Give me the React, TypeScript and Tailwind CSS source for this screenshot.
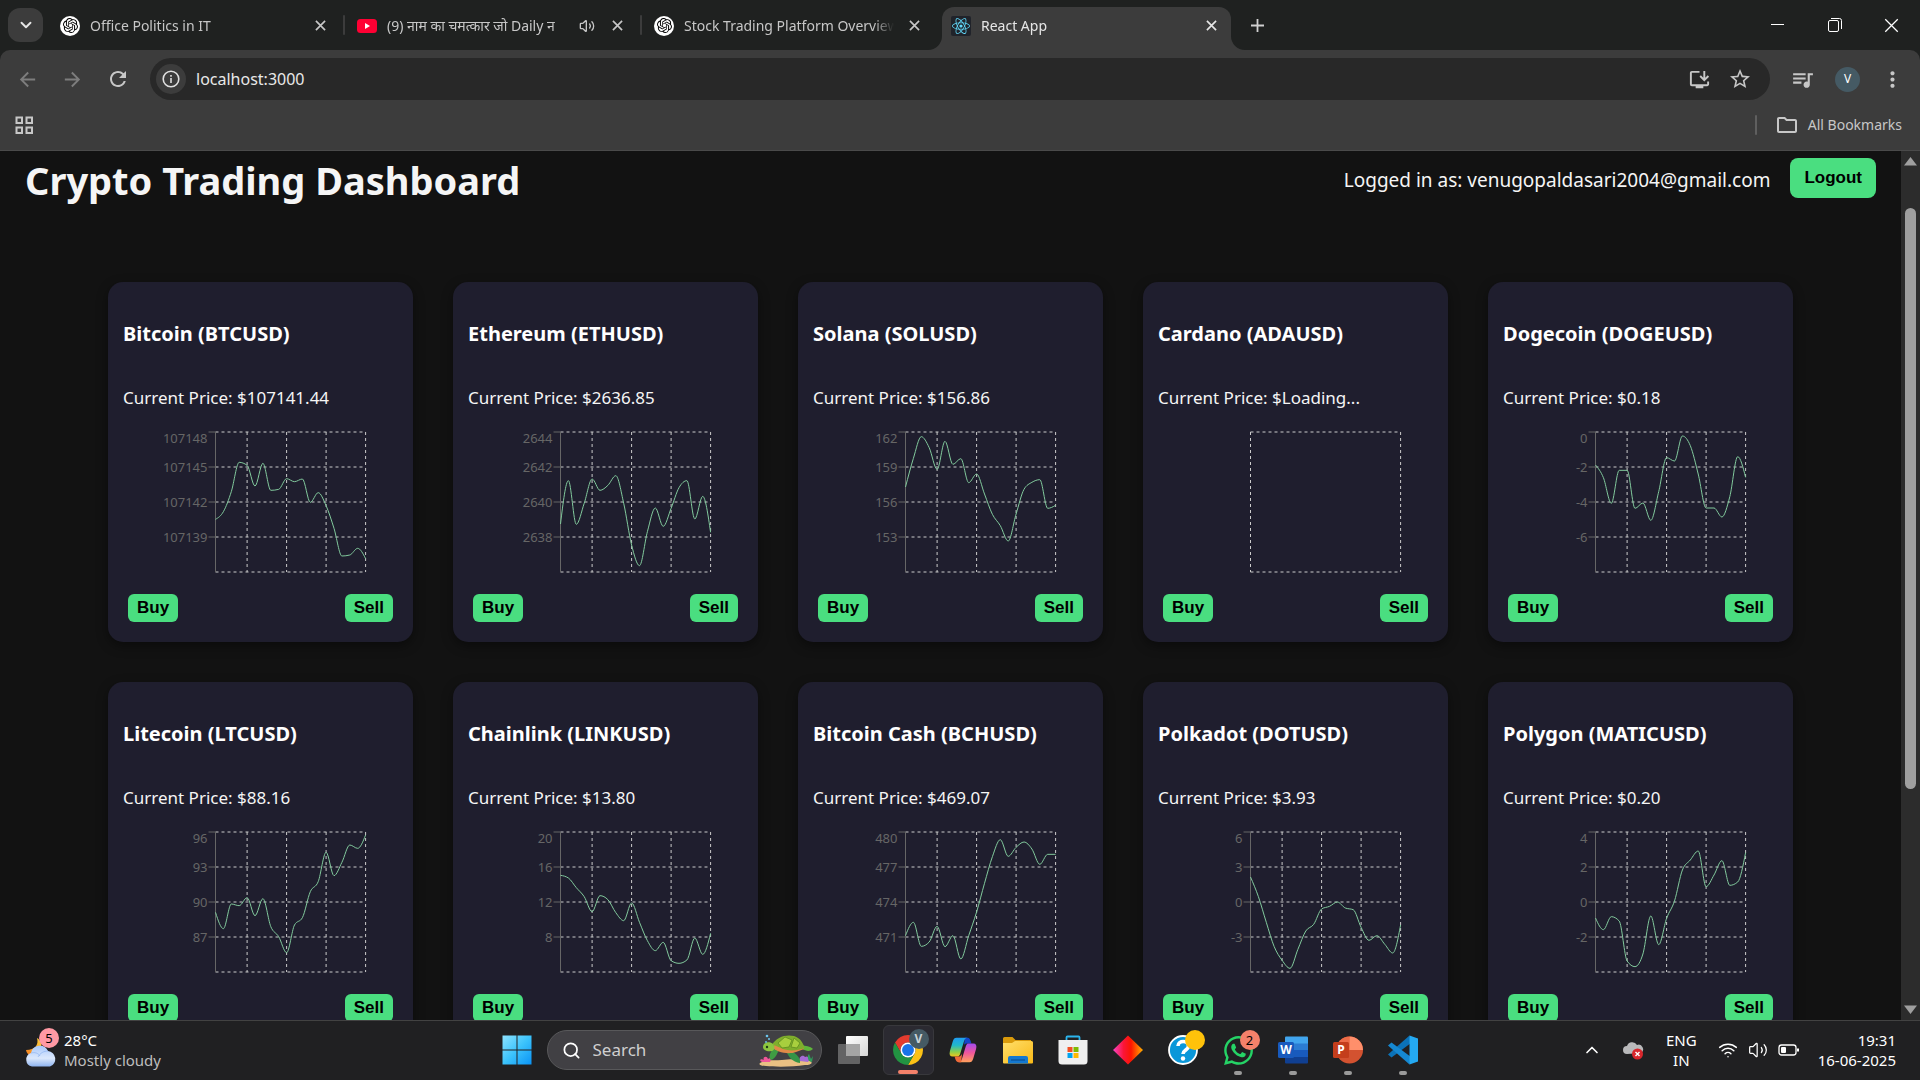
import React from "react";
import { SiOpenai } from "react-icons/si";
import { FaReact, FaWhatsapp } from "react-icons/fa";
import { MdInstallDesktop, MdQueueMusic, MdStarOutline, MdMoreVert, MdRefresh, MdArrowBack, MdArrowForward, MdOutlineFolder } from "react-icons/md";
import { ChevronDown, ChevronUp, Volume2, Wifi, Search } from "lucide-react";

type Coin = { name: string; price: string; ticks: string[]; line: number[] };

/* Each line value is the distance, in thirds of a pixel, below the top of the plot. */
const coins: Coin[] = [
  { name: "Bitcoin (BTCUSD)", price: "107141.44", ticks: ["107148", "107145", "107142", "107139"], line: [262, 239, 179, 91, 100, 162, 94, 175, 172, 140, 149, 141, 211, 182, 221, 289, 372, 369, 349, 380] },
  { name: "Ethereum (ETHUSD)", price: "2636.85", ticks: ["2644", "2642", "2640", "2638"], line: [276, 146, 277, 214, 141, 175, 160, 131, 214, 339, 401, 299, 228, 283, 229, 167, 146, 261, 193, 301] },
  { name: "Solana (SOLUSD)", price: "156.86", ticks: ["162", "159", "156", "153"], line: [165, 79, 14, 47, 112, 28, 97, 80, 152, 126, 186, 247, 281, 327, 246, 172, 151, 143, 229, 220] },
  { name: "Cardano (ADAUSD)", price: "Loading...", ticks: [], line: [] },
  { name: "Dogecoin (DOGEUSD)", price: "0.18", ticks: ["0", "-2", "-4", "-6"], line: [99, 137, 214, 115, 115, 229, 213, 265, 179, 77, 87, 12, 41, 126, 228, 228, 255, 194, 74, 136] },
  { name: "Litecoin (LTCUSD)", price: "88.16", ticks: ["96", "93", "90", "87"], line: [241, 290, 216, 221, 197, 251, 200, 284, 314, 362, 279, 257, 179, 149, 61, 131, 91, 39, 49, 9] },
  { name: "Chainlink (LINKUSD)", price: "13.80", ticks: ["20", "16", "12", "8"], line: [130, 138, 167, 194, 239, 191, 203, 242, 266, 213, 271, 326, 356, 331, 386, 394, 384, 318, 367, 304] },
  { name: "Bitcoin Cash (BCHUSD)", price: "469.07", ticks: ["480", "477", "474", "471"], line: [311, 271, 343, 330, 283, 344, 311, 381, 311, 240, 154, 74, 23, 73, 46, 30, 51, 97, 67, 67] },
  { name: "Polkadot (DOTUSD)", price: "3.93", ticks: ["6", "3", "0", "-3"], line: [135, 194, 271, 344, 385, 409, 352, 297, 277, 231, 223, 210, 228, 233, 286, 325, 311, 337, 363, 279] },
  { name: "Polygon (MATICUSD)", price: "0.20", ticks: ["4", "2", "0", "-2"], line: [258, 293, 254, 267, 387, 404, 366, 252, 338, 259, 207, 114, 84, 57, 164, 129, 86, 160, 150, 62] },
];

const LEFT = 92.5;
const TOP = 5;
const STEP = 7.9;
const WIDTH = STEP * 19;

function monotonePath(line: number[]) {
  const ys = line.map((v) => TOP + v / 3);
  const n = ys.length;
  const slopes = ys.slice(1).map((y, i) => (y - ys[i]) / STEP);
  const m = ys.map((_, i) => {
    if (i === 0 || i === n - 1) return 0;
    const a = slopes[i - 1];
    const b = slopes[i];
    return (Math.sign(a) + Math.sign(b)) * Math.min(Math.abs(a), Math.abs(b), 0.25 * Math.abs(a + b)) || 0;
  });
  m[0] = (3 * slopes[0] - m[1]) / 2;
  m[n - 1] = (3 * slopes[n - 2] - m[n - 2]) / 2;
  let d = `M${LEFT},${ys[0]}`;
  for (let i = 1; i < n; i++) {
    const x0 = LEFT + (i - 1) * STEP;
    const x1 = LEFT + i * STEP;
    const h = STEP / 3;
    d += `C${x0 + h},${ys[i - 1] + m[i - 1] * h},${x1 - h},${ys[i] - m[i] * h},${x1},${ys[i]}`;
  }
  return d;
}

function Chart({ coin }: { coin: Coin }) {
  const full = coin.line.length > 0;
  const rows = full ? [0, 35, 70, 105, 140] : [0, 140];
  const cols = full ? [4, 9, 14, 19] : [0, 19];
  return (
    <svg className="mt-[17px] h-[150px] w-[275px]" viewBox="0 0 275 150" role="img" aria-label={`${coin.name} price chart`}>
      <g stroke="#cccccc" strokeDasharray="3 3">
        {rows.map((y) => (
          <line key={y} x1={LEFT} x2={LEFT + WIDTH} y1={TOP + y} y2={TOP + y} />
        ))}
        {cols.map((c) => (
          <line key={c} x1={LEFT + c * STEP} x2={LEFT + c * STEP} y1={TOP} y2={TOP + 140} />
        ))}
      </g>
      {full && (
        <>
          <line x1={LEFT} x2={LEFT} y1={TOP} y2={TOP + 140} stroke="#666666" />
          {coin.ticks.map((t, i) => (
            <g key={t}>
              <line x1={LEFT - 7} x2={LEFT} y1={TOP + i * 35} y2={TOP + i * 35} stroke="#666666" />
              <text x={LEFT - 8} y={i === 0 ? 16 : TOP + i * 35 + 5} textAnchor="end" fill="#666666" fontSize="13">
                {t}
              </text>
            </g>
          ))}
          <path d={monotonePath(coin.line)} fill="none" stroke="#82ca9d" />
        </>
      )}
    </svg>
  );
}

function TradeButton({ children }: { children: string }) {
  return (
    <button className="h-7 rounded-md bg-[#4ade80] px-[9px] font-['Liberation_Sans',sans-serif] text-[17px] leading-7 font-bold text-black">
      {children}
    </button>
  );
}

function CoinCard({ coin }: { coin: Coin }) {
  return (
    <article className="w-[305px] rounded-[15px] bg-[#1f1e2e] px-[15px] pt-[38px] pb-5 shadow-[0_4px_12px_rgba(0,0,0,0.4)]">
      <h3 className="text-[20px] leading-7 font-bold text-white">{coin.name}</h3>
      <p className="mt-[38px] text-[17px] leading-6 text-[#f5f5f5]">Current Price: ${coin.price}</p>
      <Chart coin={coin} />
      <div className="mt-[17px] flex justify-between px-[5px]">
        <TradeButton>Buy</TradeButton>
        <TradeButton>Sell</TradeButton>
      </div>
    </article>
  );
}

function Cross({ className }: { className: string }) {
  return (
    <svg className={className} viewBox="0 0 12 12" fill="none" stroke="currentColor">
      <path d="M1 1 11 11M11 1 1 11" />
    </svg>
  );
}

function OpenAiMark() {
  return (
    <span className="flex size-5 shrink-0 items-center justify-center rounded-full bg-white text-black">
      <SiOpenai className="size-[15px]" />
    </span>
  );
}

function YoutubeMark() {
  return (
    <svg className="size-5 shrink-0" viewBox="0 0 20 20">
      <rect y="3" width="20" height="14" rx="3.5" fill="#ff0033" />
      <path d="M8 7v6l5-3z" fill="#fff" />
    </svg>
  );
}

function ReactMark() {
  return (
    <span className="flex size-5 shrink-0 items-center justify-center rounded-xs bg-[#20232a] text-[#61dafb]">
      <FaReact className="size-[18px]" />
    </span>
  );
}

function TabFlare({ className }: { className: string }) {
  return (
    <svg className={className} viewBox="0 0 14 14" fill="#3c3c3c">
      <path d="M14 0v14H0A14 14 0 0 0 14 0Z" />
    </svg>
  );
}

function Tab({ icon, title, active, muted, divider }: { icon: React.ReactNode; title: string; active?: boolean; muted?: boolean; divider?: boolean }) {
  return (
    <div className="relative flex h-full w-[297px] shrink-0 items-end">
      <div className={active ? "relative flex h-[43px] w-[289px] items-center rounded-t-[12px] bg-[#3c3c3c] pb-[6px] pl-[9px] text-[#e6e6e6]" : "relative flex h-[43px] w-[289px] items-center pb-[6px] pl-[9px] text-[#c7c7c7]"}>
        {active && <TabFlare className="absolute bottom-0 -left-[14px] size-[14px]" />}
        {active && <TabFlare className="absolute -right-[14px] bottom-0 size-[14px] -scale-x-100" />}
        {icon}
        <span className="ml-[10px] min-w-0 flex-1 overflow-hidden mask-r-from-90% text-[14px] leading-5 whitespace-nowrap">{title}</span>
        {muted && (
          <button aria-label="Mute tab" className="mr-[2px] ml-2">
            <Volume2 className="size-4" strokeWidth={2} />
          </button>
        )}
        <button aria-label="Close tab" className="mr-[10px] ml-[10px] flex size-5 items-center justify-center">
          <Cross className="size-[11px] stroke-[1.8]" />
        </button>
      </div>
      {divider && <span className="mb-[15px] ml-[3px] h-5 w-[2px] rounded bg-[#3c3c3c]" />}
    </div>
  );
}

function BrowserChrome() {
  return (
    <header className="shrink-0 bg-[#1f2120]">
      <div className="flex h-[50px] items-center pl-2">
        <button aria-label="Search tabs" className="mr-2 flex h-[34px] w-[35px] shrink-0 items-center justify-center rounded-[12px] bg-[#3c3c3c] text-[#e6e6e6]">
          <ChevronDown className="size-[18px]" strokeWidth={2.5} />
        </button>
        <Tab icon={<OpenAiMark />} title="Office Politics in IT" divider />
        <Tab icon={<YoutubeMark />} title="(9) नाम का चमत्कार जो Daily न" muted divider />
        <Tab icon={<OpenAiMark />} title="Stock Trading Platform Overview" />
        <Tab icon={<ReactMark />} title="React App" active />
        <button aria-label="New tab" className="ml-[10px] text-[#d0d0d0]">
          <svg className="size-[17px]" viewBox="0 0 17 17" stroke="currentColor" strokeWidth="1.8"><path d="M8.5 2v13M2 8.5h13" /></svg>
        </button>
        <div className="ml-auto flex text-white">
          <button aria-label="Minimize" className="flex h-[50px] w-[57px] items-center justify-center">
            <svg className="size-[13px]" viewBox="0 0 13 13" stroke="currentColor"><path d="M0 5.5h13" /></svg>
          </button>
          <button aria-label="Restore" className="flex h-[50px] w-[57px] items-center justify-center">
            <svg className="size-[14px]" viewBox="0 0 14 14" fill="none" stroke="currentColor">
              <rect x=".5" y="2.5" width="10" height="11" rx="1.5" />
              <path d="M3 .5h8.5a2 2 0 0 1 2 2V11" />
            </svg>
          </button>
          <button aria-label="Close window" className="flex h-[50px] w-[57px] items-center justify-center">
            <Cross className="size-[15px]" />
          </button>
        </div>
      </div>
      <div className="rounded-t-[10px] border-b border-[#4a4a4a] bg-[#3c3c3c] text-[#c7c7c7]">
        <div className="flex items-center pt-2 pr-[15px] pl-4">
          <button aria-label="Back" className="text-[#7d7d7d]"><MdArrowBack className="size-[23px]" /></button>
          <button aria-label="Forward" className="ml-[22px] text-[#7d7d7d]"><MdArrowForward className="size-[23px]" /></button>
          <button aria-label="Reload" className="ml-[22px]"><MdRefresh className="size-[24px]" /></button>
          <div className="ml-5 flex h-[42px] flex-1 items-center rounded-full bg-[#282828] pr-[18px] pl-[6px]">
            <button aria-label="Site information" className="flex size-[30px] items-center justify-center rounded-full bg-[#3c3c3c]">
              <svg className="size-[18px] text-[#e0e0e0]" viewBox="0 0 18 18" fill="none" stroke="currentColor" strokeWidth="1.6">
                <circle cx="9" cy="9" r="7.8" />
                <path d="M9 8v5M9 5v1.7" />
              </svg>
            </button>
            <input aria-label="Address" defaultValue="localhost:3000" className="ml-[10px] min-w-0 flex-1 bg-transparent text-[16px] leading-6 text-[#e8e8e8] outline-none" />
            <button aria-label="Install app"><MdInstallDesktop className="size-[23px]" /></button>
            <button aria-label="Bookmark this page" className="ml-[17px]"><MdStarOutline className="size-[24px]" /></button>
          </div>
          <button aria-label="Media controls" className="ml-5"><MdQueueMusic className="size-[25px]" /></button>
          <button aria-label="Profile" className="ml-5 flex size-[25px] items-center justify-center rounded-full bg-[#455a64] text-[12px] leading-4 text-white">V</button>
          <button aria-label="Menu" className="ml-5"><MdMoreVert className="size-[25px]" /></button>
        </div>
        <div className="flex h-[50px] items-center pr-[18px] pl-[15px]">
          <button aria-label="Apps">
            <svg className="size-[19px]" viewBox="0 0 19 19" fill="none" stroke="currentColor" strokeWidth="2">
              <path d="M1.5 1.5h5.5v5.5H1.5zM11.5 1.5h5.5v5.5h-5.5zM1.5 11.5h5.5v5.5H1.5zM11.5 11.5h5.5v5.5h-5.5z" />
            </svg>
          </button>
          <span className="ml-auto h-5 w-[2px] rounded bg-[#5f5f5f]" />
          <button className="ml-[18px] flex items-center gap-[9px] text-[14px] leading-5">
            <MdOutlineFolder className="size-[24px]" />
            All Bookmarks
          </button>
        </div>
      </div>
    </header>
  );
}

function Scrollbar() {
  return (
    <div className="flex w-[19px] shrink-0 flex-col items-center bg-[#2c2c2c] py-[6px] text-[#9f9f9f]">
      <svg className="h-[9px] w-[13px]" viewBox="0 0 13 9" fill="currentColor"><path d="M6.5 0 13 8.5H0z" /></svg>
      <span className="mt-[42px] h-[581px] w-[11px] rounded-full bg-[#9f9f9f]" />
      <svg className="mt-auto h-[9px] w-[13px]" viewBox="0 0 13 9" fill="currentColor"><path d="M6.5 9 0 .5h13z" /></svg>
    </div>
  );
}

function Dashboard() {
  return (
    <main className="min-w-0 flex-1 overflow-hidden">
      <div className="flex items-start justify-between px-[25px] pt-[7px]">
        <h1 className="text-[38px] leading-[44px] font-bold text-[#f5f5f5]">Crypto Trading Dashboard</h1>
        <div className="flex items-center gap-5">
          <span className="pt-1 text-[19px] leading-7 text-[#f5f5f5]">Logged in as: venugopaldasari2004@gmail.com</span>
          <button className="h-10 rounded-lg bg-[#4ade80] px-[14px] font-['Liberation_Sans',sans-serif] text-[17px] leading-6 font-bold text-black">Logout</button>
        </div>
      </div>
      <section className="mt-20 flex flex-wrap justify-center gap-10">
        {coins.map((c) => (
          <CoinCard key={c.name} coin={c} />
        ))}
      </section>
    </main>
  );
}

function WeatherIcon() {
  return (
    <svg className="size-[34px]" viewBox="0 0 34 34">
      <defs>
        <linearGradient id="moon" x1="0" y1="1" x2="1" y2="0"><stop stopColor="#f47b1c" /><stop offset="1" stopColor="#ffd23e" /></linearGradient>
        <linearGradient id="cloud" x1="0" y1="0" x2="0" y2="1"><stop stopColor="#a9c9fb" /><stop offset=".6" stopColor="#dbe8fc" /><stop offset="1" stopColor="#8fb4f0" /></linearGradient>
      </defs>
      <path d="M13 5c2 7-2 12-11 12 1 5 6 8 10 6 6-2 8-14 1-18Z" fill="url(#moon)" />
      <path d="M8 33.5a7 7 0 0 1-1-13.5 9 9 0 0 1 17-2 8 8 0 0 1 2 15.5Z" fill="url(#cloud)" />
      <path d="M7 20c4-1 7 0 9 3M14 24c2-4 6-6 10-6" fill="none" stroke="#86aeee" strokeWidth="1" opacity=".6" />
    </svg>
  );
}

function Turtle() {
  return (
    <svg className="h-[33px] w-[56px]" viewBox="0 0 56 33">
      <path d="M2 29c6-4 14-2 22-3s20-1 28 1c4 2 0 4-5 4-12 2-30 2-39 1-4 0-8-1-6-3Z" fill="#e9c083" />
      <path d="M6 26c-2-3 3-5 4-1 2-2 4 0 2 3H4c-3-1-2-4 2-2Z" fill="#f0569b" />
      <path d="M42 27c-2-4 3-7 5-4 3-2 6 2 3 5Z" fill="#a56bd6" />
      <path d="M51 27c-2-4-1-6 0-7l2 5 2-3-1 6Z" fill="#2f9c5b" />
      <path d="M43 11c5 1 9 1 12 4-3 3-7 2-11 0Z" fill="#5fb53a" />
      <path d="M16 14c-4 4-6 9-3 12 4-1 6-6 8-10Z" fill="#3f9c43" />
      <path d="M28 17c3 6 6 11 14 12 1-5-4-9-8-12Z" fill="#349447" />
      <path d="M14 13c4 5 16 8 24 5l8-3C40 6 22 4 14 13Z" fill="#e08a48" />
      <path d="M14 11C18 3 28 0 36 2c7 2 9 8 11 12-8 3-16 3-22 1-5-2-8-4-11-4Z" fill="#7fae2c" />
      <path d="M20 9 27 3l7 3-3 7-7 1zM36 4l6 5-3 5-6-1z" fill="#a8cf3e" stroke="#5f8c20" strokeWidth=".8" />
      <path d="M5 13c0-5 7-6 10-3 2 2 2 6-1 7-5 1-9-1-9-4Z" fill="#8cc53f" />
      <circle cx="9" cy="13" r="1.2" fill="#1d3a14" />
      <circle cx="9" cy="2" r="1.3" fill="#6cc6ee" />
      <circle cx="11" cy="5" r="1" fill="#6cc6ee" />
      <circle cx="8" cy="8" r=".9" fill="#6cc6ee" />
    </svg>
  );
}

function WindowsLogo() {
  return (
    <svg className="size-[30px]" viewBox="0 0 30 30">
      <defs><linearGradient id="win" x1="0" y1="0" x2="1" y2="1"><stop stopColor="#8ee3ff" /><stop offset=".5" stopColor="#3cc3fb" /><stop offset="1" stopColor="#0a93f5" /></linearGradient></defs>
      <path d="M.5 .5h14v14H.5zM15.500 .5h14v14h-14zM.5 15.500h14v14H.5zM15.500 15.500h14v14h-14z" fill="url(#win)" />
    </svg>
  );
}

function TaskView() {
  return (
    <svg className="size-[30px]" viewBox="0 0 30 30">
      <defs><linearGradient id="tv" x1="0" y1="0" x2="1" y2="1"><stop stopColor="#fff" /><stop offset="1" stopColor="#d6d6d6" /></linearGradient></defs>
      <rect x="8" y="1" width="22" height="20" rx="1" fill="url(#tv)" />
      <rect y="9" width="22" height="20" rx="1" fill="#707070" opacity=".85" />
      <rect x="8" y="9" width="14" height="12" fill="#a5a5a5" />
    </svg>
  );
}

function ChromeLogo() {
  const arc = "M-20.78-12A24 24 0 0 1 20.78-12L0-12A12 12 0 0 0-10.39 6Z";
  return (
    <svg className="size-[30px]" viewBox="-24 -24 48 48">
      <path d={arc} fill="#e33b2e" />
      <path d={arc} fill="#fbc116" transform="rotate(120)" />
      <path d={arc} fill="#229342" transform="rotate(240)" />
      <circle r="12" fill="#fff" />
      <circle r="9.5" fill="#1a73e8" />
    </svg>
  );
}

function CopilotLogo() {
  return (
    <svg className="size-[28px]" viewBox="0 0 30 30">
      <defs>
        <linearGradient id="cpA" x1="0" y1="0" x2="0" y2="1"><stop stopColor="#1f9cf0" /><stop offset=".4" stopColor="#21b8c9" /><stop offset=".75" stopColor="#8bcf4b" /><stop offset="1" stopColor="#f0c51c" /></linearGradient>
        <linearGradient id="cpB" x1="0" y1="0" x2="0" y2="1"><stop stopColor="#a24bf0" /><stop offset=".5" stopColor="#f0569b" /><stop offset="1" stopColor="#ffa05c" /></linearGradient>
      </defs>
      <path d="M17 2h3c2 0 3 2 4 6h-5c-2 0-3 1-3 3Z" fill="#1246c9" />
      <path d="M8 2h12c-2 0-3 1-4 4l-4 13c-1 3-2 3-4 3H4c-3 0-4-2-3-6L4 6c1-3 2-4 4-4Z" fill="url(#cpA)" />
      <path d="M22 28H10c2 0 3-1 4-4l4-13c1-3 2-3 4-3h4c3 0 4 2 3 6l-3 10c-1 3-2 4-4 4Z" fill="url(#cpB)" />
      <path d="M13 28h-3c-2 0-3-2-4-6h4c2 0 3-1 4-3Z" fill="#ef6a3a" />
    </svg>
  );
}

function FolderLogo() {
  return (
    <svg className="size-[30px]" viewBox="0 0 30 30">
      <defs><linearGradient id="fold" x1="0" y1="0" x2="1" y2="1"><stop stopColor="#ffdf6b" /><stop offset="1" stopColor="#f9b917" /></linearGradient></defs>
      <path d="M0 3.5A1.5 1.5 0 0 1 1.5 2h8l3 3H28v8H0z" fill="#d99a0b" />
      <path d="M0 8h9l3-2h16.5A1.5 1.5 0 0 1 30 7.5v20a1 1 0 0 1-1 1H1a1 1 0 0 1-1-1z" fill="url(#fold)" />
      <path d="M5 28.500V23a2 2 0 0 1 2-2h16a2 2 0 0 1 2 2v5.500z" fill="#1478d0" />
      <path d="M8 25h14" stroke="#0a4f94" strokeWidth="1.2" />
    </svg>
  );
}

function StoreLogo() {
  return (
    <svg className="size-[30px]" viewBox="0 0 30 30">
      <path d="M8.5 6V2.500a1 1 0 0 1 1-1h11a1 1 0 0 1 1 1V6" fill="none" stroke="#2bb5ee" strokeWidth="1.8" />
      <path d="M.5 5h29v21a3.500 3.500 0 0 1-3.500 3.500H4A3.500 3.500 0 0 1 .5 26z" fill="#efefef" />
      <path d="M9.500 12h5v5h-5z" fill="#f25022" />
      <path d="M15.500 12h5v5h-5z" fill="#7fba00" />
      <path d="M9.500 18h5v5h-5z" fill="#00a4ef" />
      <path d="M15.500 18h5v5h-5z" fill="#ffb900" />
    </svg>
  );
}

function DiamondLogo() {
  return (
    <svg className="size-[30px]" viewBox="0 0 30 30">
      <defs><linearGradient id="dia"><stop stopColor="#f545c8" /><stop offset=".35" stopColor="#fb1538" /><stop offset=".6" stopColor="#fb1500" /><stop offset="1" stopColor="#ffb000" /></linearGradient></defs>
      <path d="M15 .5 30 15 15 29.500 0 15z" fill="url(#dia)" />
    </svg>
  );
}

function HelpLogo() {
  return (
    <svg className="size-[30px]" viewBox="0 0 30 30" fill="none">
      <circle cx="15" cy="15" r="14" fill="#0a97d9" stroke="#fff" strokeWidth="1.8" />
      <path d="M10 11c0-6 10.500-6 10.500 0 0 4-5.500 4-5.500 8" stroke="#fff" strokeWidth="3.6" />
      <circle cx="15" cy="23.500" r="2.2" fill="#fff" />
    </svg>
  );
}

function WordLogo() {
  return (
    <svg className="size-[30px]" viewBox="0 0 30 30">
      <path d="M8 1.500h21a1 1 0 0 1 1 1V9H7V2.500a1 1 0 0 1 1-1" fill="#41a5ee" />
      <path d="M7 8.500h23V15H7z" fill="#2b7cd3" />
      <path d="M7 15h23v7H7z" fill="#185abd" />
      <path d="M7 22h23v5.500a1 1 0 0 1-1 1H8a1 1 0 0 1-1-1z" fill="#103f91" />
      <rect y="7" width="16" height="16" rx="1.5" fill="#185abd" />
      <text x="8" y="19" textAnchor="middle" fontSize="12" fontWeight="700" fill="#fff">W</text>
    </svg>
  );
}

function PowerPointLogo() {
  return (
    <svg className="size-[30px]" viewBox="0 0 30 30">
      <circle cx="16.5" cy="15" r="13.5" fill="#d35230" />
      <path d="M16.500 1.500A13.500 13.500 0 0 0 3 15h13.500z" fill="#ed6c47" />
      <path d="M16.500 1.500A13.500 13.500 0 0 1 30 15H16.500z" fill="#ff8f6b" />
      <rect y="7" width="16" height="16" rx="1.5" fill="#c43e1c" />
      <text x="8" y="19" textAnchor="middle" fontSize="12" fontWeight="700" fill="#fff">P</text>
    </svg>
  );
}

function VsCodeLogo() {
  return (
    <svg className="size-[30px]" viewBox="0 0 30 30">
      <path d="M21.500 .5 23 8 3.500 22.500 0 19.500z" fill="#0b72b8" />
      <path d="M21.500 29.500 23 22 3.500 7.500 0 10.500z" fill="#1588d2" />
      <path d="M21.500 .5 30 3.500v23l-8.500 3z" fill="#24a9f2" />
    </svg>
  );
}

function TaskItem({ label, children, badge, running }: { label: string; children: React.ReactNode; badge?: React.ReactNode; running?: boolean }) {
  return (
    <button aria-label={label} className="relative flex h-[50px] w-[55px] items-center justify-center">
      {children}
      {badge}
      {running && <span className="absolute bottom-0 h-1 w-2 rounded-full bg-[#9a9a9a]" />}
    </button>
  );
}

function Taskbar() {
  return (
    <footer className="flex h-[60px] shrink-0 items-center border-t border-[#424242] bg-[#202022] pb-px text-white">
      <div className="flex flex-1 items-center pl-6">
        <button className="relative flex items-center gap-[6px] text-left">
          <WeatherIcon />
          <span className="absolute -top-[2px] left-[15px] flex size-5 items-center justify-center rounded-full bg-[#ff99a4] text-[13px] leading-4 text-black">5</span>
          <span className="text-[15px] leading-5">
            28°C
            <br />
            <span className="text-[#bdbdbd]">Mostly cloudy</span>
          </span>
        </button>
      </div>
      <nav className="flex items-center pl-3" aria-label="Taskbar">
        <button aria-label="Start" className="mr-[15px]"><WindowsLogo /></button>
        <label className="mr-1 flex h-10 w-[275px] items-center rounded-full border border-[#58585a] bg-[#414044] pr-[7px] pl-[14px]">
          <Search className="size-[19px]" strokeWidth={2.2} />
          <input aria-label="Search" placeholder="Search" className="ml-3 min-w-0 flex-1 bg-transparent text-[17px] leading-6 outline-none placeholder:text-[#cfcfcf]" />
          <Turtle />
        </label>
        <TaskItem label="Task view"><TaskView /></TaskItem>
        <button aria-label="Chrome" className="relative mx-[2px] flex h-[50px] w-[51px] items-center justify-center rounded-md border border-[#38383c] bg-[#2b2a31]">
          <ChromeLogo />
          <span className="absolute top-[3px] right-[4px] flex size-5 items-center justify-center rounded-full bg-[#455a64] text-[12px] leading-4 font-bold text-[#c9d3d8]">V</span>
          <span className="absolute bottom-0 h-1 w-5 rounded-full bg-[#f4816a]" />
        </button>
        <TaskItem label="Copilot"><CopilotLogo /></TaskItem>
        <TaskItem label="File Explorer"><FolderLogo /></TaskItem>
        <TaskItem label="Microsoft Store"><StoreLogo /></TaskItem>
        <TaskItem label="Power Automate"><DiamondLogo /></TaskItem>
        <TaskItem label="Get Help" badge={<span className="absolute top-[5px] right-[6px] size-5 rounded-full bg-[#ffc20a]" />}><HelpLogo /></TaskItem>
        <TaskItem label="WhatsApp" running badge={<span className="absolute top-[5px] right-[6px] flex size-5 items-center justify-center rounded-full bg-[#f4816a] text-[13px] leading-4 text-black">2</span>}>
          <FaWhatsapp className="size-[33px] text-[#25d366]" />
        </TaskItem>
        <TaskItem label="Word" running><WordLogo /></TaskItem>
        <TaskItem label="PowerPoint" running><PowerPointLogo /></TaskItem>
        <TaskItem label="Visual Studio Code" running><VsCodeLogo /></TaskItem>
      </nav>
      <div className="flex flex-1 items-center justify-end pr-6">
        <button aria-label="Show hidden icons"><ChevronUp className="size-5" /></button>
        <button aria-label="OneDrive" className="ml-[21px]">
          <svg className="size-[21px]" viewBox="0 0 21 21">
            <path d="M4 14a4 4 0 0 1 0-8 5.500 5.500 0 0 1 10-1 4.500 4.500 0 0 1 4 8z" fill="#b9b9bb" />
            <circle cx="14.5" cy="14" r="5.5" fill="#d9262c" />
            <path d="m12.500 12 4 4m0-4-4 4" stroke="#fff" strokeWidth="1.4" />
          </svg>
        </button>
        <button className="ml-[22px] text-center text-[15px] leading-5">
          ENG
          <br />
          IN
        </button>
        <button aria-label="Network, volume and battery" className="ml-[21px] flex items-center gap-[10px]">
          <Wifi className="size-5" strokeWidth={1.8} />
          <Volume2 className="size-5" strokeWidth={1.5} />
          <svg className="h-5 w-[22px]" viewBox="0 0 22 20" fill="none" stroke="currentColor" strokeWidth="1.3">
            <rect x="1" y="5" width="17" height="10" rx="2.5" />
            <path d="M20 8.500v3" strokeWidth="2" />
            <rect x="3" y="7" width="5" height="6" rx="1" fill="currentColor" stroke="none" />
          </svg>
        </button>
        <button className="ml-[18px] text-right text-[15px] leading-5">
          19:31
          <br />
          16-06-2025
        </button>
      </div>
    </footer>
  );
}

export default function App() {
  return (
    <div className="flex h-screen flex-col overflow-hidden bg-[#121212] font-['Noto_Sans','Open_Sans',sans-serif]">
      <BrowserChrome />
      <div className="flex min-h-0 flex-1">
        <Dashboard />
        <Scrollbar />
      </div>
      <Taskbar />
    </div>
  );
}
